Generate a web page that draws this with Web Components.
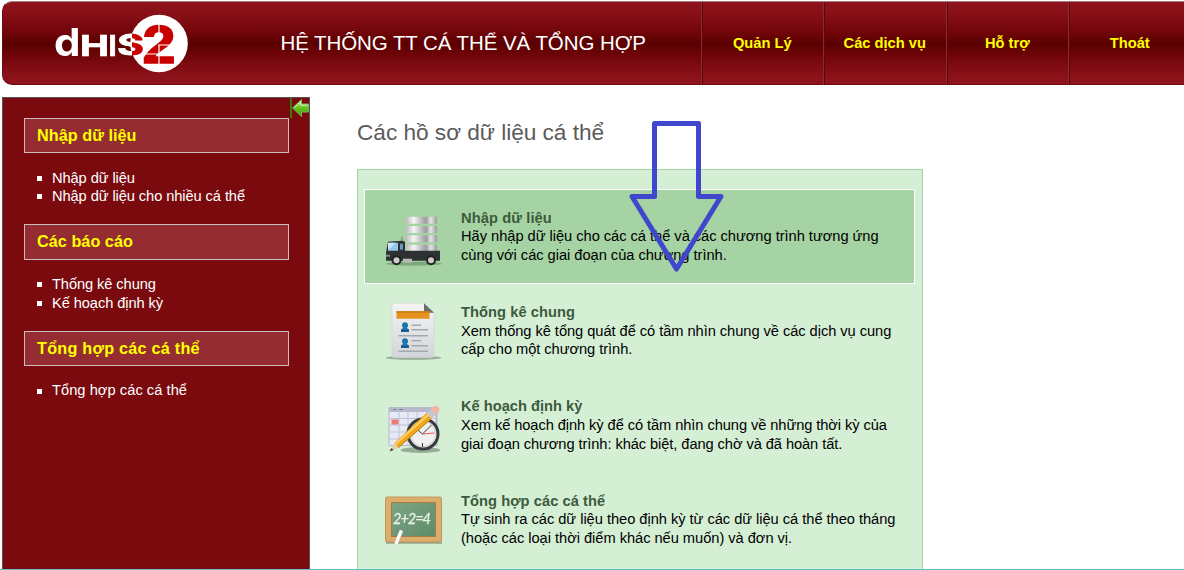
<!DOCTYPE html>
<html lang="vi"><head><meta charset="utf-8"><title>DHIS 2</title>
<style>
html,body{margin:0;height:100%;overflow:hidden;background:#fff}
body{font:14.667px/18.6px "Liberation Sans",Arial,sans-serif;color:#000}
</style></head><body>
<app-page>
  <top-bar slot="top" heading="HỆ THỐNG TT CÁ THỂ VÀ TỔNG HỢP">
    <nav-tab>Quản Lý</nav-tab><nav-tab>Các dịch vụ</nav-tab><nav-tab>Hỗ trợ</nav-tab><nav-tab>Thoát</nav-tab>
  </top-bar>
  <side-bar slot="side">
    <menu-group heading="Nhập dữ liệu"><menu-link>Nhập dữ liệu</menu-link><menu-link>Nhập dữ liệu cho nhiều cá thể</menu-link></menu-group>
    <menu-group heading="Các báo cáo"><menu-link>Thống kê chung</menu-link><menu-link>Kế hoạch định kỳ</menu-link></menu-group>
    <menu-group heading="Tổng hợp các cá thể" style="--gs:.25px;--ls:.04px"><menu-link>Tổng hợp các cá thể</menu-link></menu-group>
  </side-bar>
  <intro-panel heading="Các hồ sơ dữ liệu cá thể">
    <intro-item active icon="truck" heading="Nhập dữ liệu" style="--hs:.11px;--ls:-.03px">Hãy nhập dữ liệu cho các cá thể và các chương trình tương ứng<br>cùng với các giai đoạn của chương trình.</intro-item>
    <intro-item icon="report" heading="Thống kê chung" style="--hs:.06px;--ls:-.05px">Xem thống kê tổng quát để có tầm nhìn chung về các dịch vụ cung<br>cấp cho một chương trình.</intro-item>
    <intro-item icon="schedule" heading="Kế hoạch định kỳ" style="--hs:0px;--ls:-.08px">Xem kế hoạch định kỳ để có tầm nhìn chung về những thời kỳ của<br>giai đoạn chương trình: khác biệt, đang chờ và đã hoàn tất.</intro-item>
    <intro-item icon="board" heading="Tổng hợp các cá thể" style="--hs:.05px;--ls:-.035px">Tự sinh ra các dữ liệu theo định kỳ từ các dữ liệu cá thể theo tháng<br>(hoặc các loại thời điểm khác nếu muốn) và đơn vị.</intro-item>
  </intro-panel>
</app-page>
<script>
const define=(name,render)=>customElements.define(name,class extends HTMLElement{
  constructor(){super();this.attachShadow({mode:'open'});}
  connectedCallback(){this.shadowRoot.innerHTML=render(this);}
});

define('app-page',()=>`<style>
:host{display:flex;flex-direction:column;position:relative;width:1184px;height:570px;overflow:hidden;box-sizing:border-box;padding:1px 0 0 2px}
.body{display:flex;flex:1;min-height:0;margin-top:12px}
.edge{position:absolute;left:0;right:0;bottom:0;height:1px;background:#62c1c4}
.arrow{position:absolute;left:626px;top:116px}
</style><slot name="top"></slot><div class="body"><slot name="side"></slot><slot></slot></div>
<svg class="arrow" width="102" height="160" fill="none" stroke="#3f48cc" stroke-width="5" stroke-linejoin="round"><path d="M28.5 7.5h44v73h22.5L50.5 153 6 80.500h22.5z"/></svg>
<div class="edge"></div>`);

define('top-bar',el=>`<style>
:host{display:flex;flex:none;height:84px;box-sizing:border-box;border:1px solid #6c0b13;border-top-color:#a67d80;border-right:0;border-radius:10px 0 0 10px;
background:linear-gradient(#8f131c,#8a1118 12%,#700509 38%,#5a0000 50%,#700509 66%,#8a1118 88%,#8f131c)}
dhis-logo{margin:10px 0 0 50px}
h1{flex:1;margin:0 0 0 88.5px;font-weight:400;font-size:20.5px;line-height:82px;color:#fff;white-space:nowrap;letter-spacing:-.08px}
nav{display:grid;grid-template-columns:repeat(4,122.5px);width:483.500px}
</style><dhis-logo></dhis-logo><h1>${el.getAttribute('heading')}</h1><nav><slot></slot></nav>`);

define('nav-tab',()=>`<style>
:host{display:block;border-left:1px solid #8b2a30;box-shadow:inset 1px 0 #5c070c;text-align:center;font-weight:700;line-height:82.500px;color:#ff0;white-space:nowrap}
</style><slot></slot>`);

define('dhis-logo',()=>`<style>:host{display:block;width:139px;height:64px}svg{display:block;filter:blur(.3px)}text{font-family:Inter,"Liberation Sans",sans-serif;font-weight:700}</style>
<svg width="139" height="64" viewBox="53 12 139 64">
<defs><linearGradient id="s" gradientUnits="userSpaceOnUse" x1="118" x2="144" y1="0" y2="0"><stop offset=".52" stop-color="#fff"/><stop offset=".52" stop-color="#c80000"/></linearGradient></defs>
<circle cx="159" cy="43.5" r="28.8" fill="#fff"/>
<g fill="#fff"><text x="54" y="55.6" font-size="38.500" textLength="26.500" lengthAdjust="spacingAndGlyphs">d</text>
<g stroke="#fff" stroke-width=".7"><text x="80" y="55.6" font-size="29" textLength="29" lengthAdjust="spacingAndGlyphs">H</text>
<text x="108.500" y="55.6" font-size="29">I</text></g></g>
<text x="117" y="55.2" font-size="28" textLength="27" lengthAdjust="spacingAndGlyphs" fill="url(#s)" stroke="url(#s)" stroke-width=".8">S</text>
<text x="142.5" y="62.5" font-size="54" textLength="33" lengthAdjust="spacingAndGlyphs" fill="#c80000" stroke="#c80000" stroke-width="1.500" style="font-family:'Liberation Sans'">2</text>
<path d="M159 22v13M144 54h31M159 45v20M158 45h17" stroke="#fff" stroke-width="1.2"/>
</svg>`);

define('side-bar',()=>`<style>
:host{display:block;position:relative;flex:none;width:308px;box-sizing:border-box;border:1px solid #5a5052;border-bottom:0;background:#7a0a0e;padding:20px 20px 0 21px}
.hide{position:absolute;right:0;top:0}
</style><slot></slot><svg class="hide" width="19" height="20" viewBox="0 0 19 20">
<defs><linearGradient id="g" x2="0" y2="1"><stop stop-color="#c0ea95"/><stop offset=".5" stop-color="#62c21e"/><stop offset="1" stop-color="#3a9a08"/></linearGradient></defs>
<path d="M0 0h2v20H0z" fill="#397a08"/><path d="M2.500 10L11.500 1.500V6H18.500v8h-7v4.500z" fill="url(#g)" stroke="#7cb35a"/><path d="M4 9.800L10.500 4v3.200h7" fill="none" stroke="#d7f4bb" stroke-width=".9"/></svg>`);

define('menu-group',el=>`<style>
:host{display:block;height:106.450px}
h2{box-sizing:border-box;height:35.400px;margin:0;border:1px solid #cdbcbd;background:#942c31;color:#ff0;font-size:16.2px;line-height:33px;padding-left:12px;letter-spacing:var(--gs,.05px)}
ul{margin:15.200px 0 0;padding:0}
</style><h2>${el.getAttribute('heading')}</h2><ul><slot></slot></ul>`);

define('menu-link',()=>`<style>
:host{display:flex;align-items:center;height:18.6px;padding-left:13px;color:#fff;white-space:nowrap;letter-spacing:var(--ls,-.09px)}
i{width:5px;height:5px;margin:1px 10px 0 0;background:#fff}
</style><i></i><span><slot></slot></span>`);

define('intro-panel',el=>`<style>
:host{display:flex;flex-direction:column;width:566px;margin-left:47px}
h1{margin:0;height:72px;font-size:22.7px;line-height:70px;font-weight:400;color:#5b5b5b;letter-spacing:-.05px;white-space:nowrap}
section{flex:1;box-sizing:border-box;border:1px solid #a5d2a4;border-bottom:0;background:#d5efd5;padding:19.4px 7px 0 6px}
</style><h1>${el.getAttribute('heading')}</h1><section><slot></slot></section>`);

const icons={
truck:`<defs><linearGradient id="m"><stop stop-color="#bbb"/><stop offset=".25" stop-color="#f5f5f5"/><stop offset=".5" stop-color="#bcbcc0"/><stop offset=".65" stop-color="#999b9e"/><stop offset=".8" stop-color="#e5e5e5"/><stop offset="1" stop-color="#999"/></linearGradient></defs>
<g transform="translate(0 1.700)"><ellipse cx="29" cy="53" rx="28" ry="2" fill="#42684266"/>
<path d="M21 6h31v7H21zM21 15.300h31v7H21zM21 24.600h31v7H21zM21 34h31v7H21z" fill="url(#m)"/>
<path d="M17 26v6" stroke="#777"/><path d="M3 31l14-1 3 1v9h35v10H1V42z" fill="#2d3133"/>
<path d="M4 32h9v8H3z" fill="#93c6ec"/><path d="M15 33h3v6h-3z" fill="#6999bd"/><path d="M3 32h7l-3 4-4 3z" fill="#cbe6f8"/>
<path d="M18 48h9v4h-9z" fill="#b9b9b9"/><circle cx="11.500" cy="49.500" r="5" fill="#222"/><circle cx="46" cy="49.500" r="5" fill="#222"/><circle cx="11.500" cy="49.500" r="3" fill="#ccc"/><circle cx="46" cy="49.500" r="3" fill="#ccc"/><path d="M1 44h4v2H1z" fill="#888"/></g>`,
report:`<defs><linearGradient id="p" x2="0" y2="1"><stop stop-color="#f5f5f6"/><stop offset="1" stop-color="#d2d4d7"/></linearGradient></defs>
<g transform="translate(0 -1.200)"><ellipse cx="28.500" cy="56" rx="28" ry="2" fill="#718971aa"/><path d="M9 1.500h30l10 9.500V54q0 2-2 2H9q-2 0-2-2V3.500q0-2 2-2z" fill="url(#p)" stroke="#c8ccc9" stroke-width=".5"/>
<path d="M39 1.500v9.500h10z" fill="#6d6e6c"/><path d="M11.500 9.500h33V17h-33z" fill="#e5931c"/><path d="M11.500 9.500h33V11h-33z" fill="#c07a15"/>
<g fill="#1976ad"><circle cx="20" cy="23.500" r="3"/><path d="M16 30q0-4 4-4t4 4zM16 46q0-4 4-4t4 4z"/><circle cx="20" cy="39.500" r="3"/></g>
<g fill="#1b5386"><path d="M16 27.500l4 1 4-1v2.500h-8zM16 43.500l4 1 4-1v2.500h-8z"/></g>
<path d="M26.500 23.500H36M26.500 28H43M26.500 39H36M26.500 44H43M13.500 34H43M13.500 49.500H43" stroke="#9fabb1" stroke-width="1.600"/></g>`,
schedule:`<g transform="translate(-.5 8)"><ellipse cx="36" cy="45" rx="20" ry="3" fill="#50635277"/><rect x="4" y="2" width="49" height="39" rx="1.500" fill="#b6b9ca"/><path d="M5 7h46v33H5z" fill="#e7e9f4"/>
<path d="M5 13.500h46M5 20h46M5 27h46M5 34h46M14.500 7v33M23.500 7v33M32.500 7v33M42 7v33" stroke="#bfc3d8"/><path d="M7 14.500h7v5H7z" fill="#ef7b78"/><path d="M9 4.500h3M15 4.500h3" stroke="#74788a"/>
<circle cx="38.500" cy="29" r="15" fill="#f0f0ee" stroke="#393c3e" stroke-width="3"/><circle cx="38.500" cy="29" r="12.500" fill="none" stroke="#cfcfcf"/>
<path d="M38 29l9-9M38 29l-7-6M38 38v4" stroke="#3a3a3a"/><path d="M38 29l12-1" stroke="#e55"/>
<path d="M10 38L42 8l5 5.500L14 42.500l-6 2z" fill="#efa71b"/><path d="M11 39L44 9.500" stroke="#ffd36b" stroke-width="1.800"/><path d="M13.500 43L47 13.500" stroke="#b87910"/><path d="M10 38l4 4.500-7.500 3z" fill="#edcf9f"/><path d="M7 43l2 2-4 1.500z" fill="#333"/>
<path d="M42 8l5-4 5 5.500-5 4z" fill="#c5c6ca"/><path d="M46 4.500q5-6 8-2.500t-2 7.500z" fill="#f2b5a4"/></g>`,
board:`<defs><linearGradient id="b" x2="1" y2="1"><stop stop-color="#7ca683"/><stop offset="1" stop-color="#5f8b68"/></linearGradient></defs>
<path d="M1 50.500h56" stroke="#69735a99" stroke-width="2.500"/><rect x=".5" y="5" width="56" height="45" rx="1.500" fill="#dcae6c" stroke="#c0965c"/><path d="M6.500 10.500h44v34h-44z" fill="url(#b)" stroke="#a67c44"/>
<text x="8" y="31.500" font-size="14.500" textLength="38" font-family="Lato" font-style="italic" fill="#e8f1e8" stroke="#e8f1e8" stroke-width=".3">2+2=4</text>
<path d="M16.500 38.500L11 52" stroke="#fff" stroke-width="3.500"/><path d="M18 39.500L13 52.500" stroke="#aaa8"/>`};

define('intro-item',el=>`<style>
:host{display:flex;box-sizing:border-box;height:94.3px;border:1px solid transparent;padding:18.500px 0 0 20px}
:host([active]){background:#a5d3a3;border-color:#fff}
svg{flex:none;width:59px;height:59px;margin-right:17px;filter:blur(.4px)}
h3{margin:0;font-size:14.667px;line-height:18.600px;color:#3c5a3c;letter-spacing:var(--hs)}
p{margin:0;letter-spacing:var(--ls);white-space:nowrap}
</style><svg viewBox="0 0 59 59">${icons[el.getAttribute('icon')]}</svg><div><h3>${el.getAttribute('heading')}</h3><p><slot></slot></p></div>`);
</script></body></html>
